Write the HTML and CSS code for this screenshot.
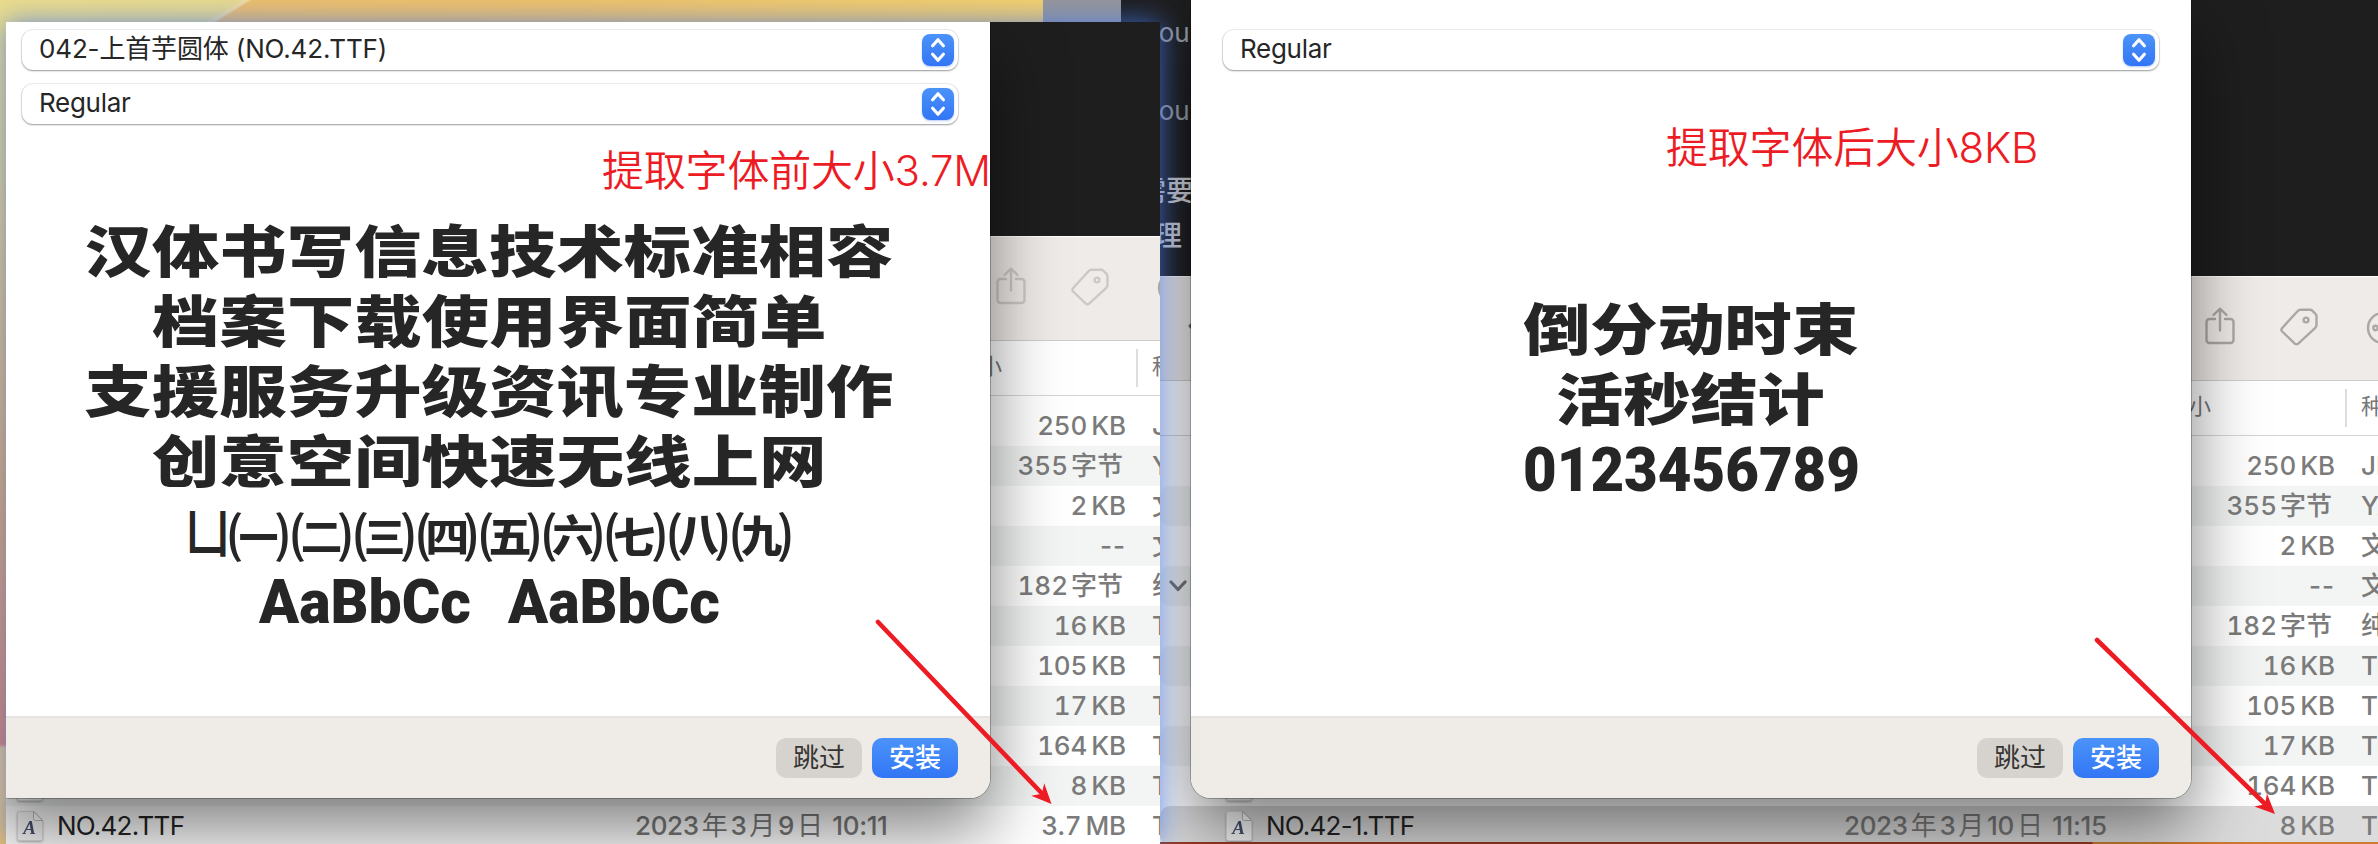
FILE: index.html
```html
<!DOCTYPE html>
<html lang="zh-CN">
<head>
<meta charset="utf-8">
<title>字体安装对比</title>
<link rel="stylesheet" href="styles.css">
</head>
<body>
<svg class="defs" width="0" height="0">
  <symbol id="share" viewBox="0 0 30 38"><path d="M10 12H4.500a3 3 0 0 0-3 3V33a3 3 0 0 0 3 3h21a3 3 0 0 0 3-3V15a3 3 0 0 0-3-3H20M15 23.500V2M8.500 8 15 1.700 21.500 8"/></symbol>
  <symbol id="tag" viewBox="0 0 38 38"><path d="M20.500 1.800h9.500q1.500 0 2.500 1l3 3q1 1 1 2.500v8.500q0 2-1.500 3.400L18.500 35.400q-2 1.800-4 0L2.200 23.500q-1.600-1.700 0-3.500L17.500 3.200q1.200-1.400 3-1.400z"/><circle class="dot" cx="26" cy="12" r="2.400"/></symbol>
  <symbol id="more" viewBox="0 0 34 34"><circle cx="17" cy="17" r="15"/><circle class="dot" cx="9.500" cy="17" r="2.200"/><circle class="dot" cx="17" cy="17" r="2.200"/><circle class="dot" cx="24.500" cy="17" r="2.200"/></symbol>
  <symbol id="updown" viewBox="0 0 16 28"><path d="M2.200 9.500 8 3l5.800 6.500M2.200 18.500 8 25l5.800-6.500"/></symbol>
  <symbol id="down" viewBox="0 0 18 12"><path d="M2 2l7 7.500L16 2"/></symbol>
  <symbol id="back" viewBox="0 0 12 20"><path d="M10 2 2 10l8 8"/></symbol>
  <symbol id="fontfile" viewBox="0 0 26 30"><path class="page" d="M2.500.5h14l9 9v18a2 2 0 0 1-2 2h-21a2 2 0 0 1-2-2v-25a2 2 0 0 1 2-2z"/><path class="fold" d="M16.500.5v7a2 2 0 0 0 2 2h7z"/><text x="12.500" y="22.500" text-anchor="middle">A</text></symbol>
</svg>

<main class="desktop">
  <div class="peek"></div>

  <section class="capture capture-after">
    <div class="editor">
      <p>You)</p><p>You)</p><p class="note">需要</p><p class="note last">理</p>
    </div>
    <div class="finder">
      <div class="toolbar">
        <svg class="back"><use href="#back"/></svg>
        <svg class="share"><use href="#share"/></svg>
        <svg class="tag"><use href="#tag"/></svg>
        <svg class="more"><use href="#more"/></svg>
      </div>
      <div class="columns"><span class="size">大小</span><i></i><span>种类</span></div>
      <ul class="rows">
        <li><span class="size">250 KB</span><span>JPEG</span></li>
        <li><span class="size zh">355 字节</span><span>YAML</span></li>
        <li><span class="size">2 KB</span><span>文稿</span></li>
        <li><svg class="open"><use href="#down"/></svg><span class="size dash">--</span><span>文件夹</span></li>
        <li><span class="size zh">182 字节</span><span>纯文本</span></li>
        <li><span class="size">16 KB</span><span>TrueType</span></li>
        <li><span class="size">105 KB</span><span>TrueType</span></li>
        <li><span class="size">17 KB</span><span>TrueType</span></li>
        <li><svg class="file"><use href="#fontfile"/></svg><span class="size">164 KB</span><span>TrueType</span></li>
        <li class="selected"><svg class="file"><use href="#fontfile"/></svg><b>NO.42-1.TTF</b><time>2023<em>年</em>3<em>月</em>10<em>日</em> 11:15</time><span class="size">8 KB</span><span>TrueType</span></li>
      </ul>
    </div>
    <div class="dialog">
      <div class="popup"><span>Regular</span><span class="stepper"><svg><use href="#updown"/></svg></span></div>
      <p class="remark">提取字体后大小8KB</p>
      <svg class="specimen" viewBox="0 0 1000 250">
        <text class="han" transform="translate(332 66) scale(1.2 1)" textLength="280">倒分动时束</text>
        <text class="han" transform="translate(365 136) scale(1.2 1)" textLength="224">活秒结计</text>
        <text class="latin" x="332" y="207" textLength="337" lengthAdjust="spacingAndGlyphs">0123456789</text>
      </svg>
      <footer><button>跳过</button><button class="primary">安装</button></footer>
    </div>
  </section>

  <section class="capture capture-before">
    <div class="finder">
      <div class="toolbar">
        <svg class="share"><use href="#share"/></svg>
        <svg class="tag"><use href="#tag"/></svg>
        <svg class="more"><use href="#more"/></svg>
      </div>
      <div class="columns"><span class="size">大小</span><i></i><span>种类</span></div>
      <ul class="rows">
        <li><span class="size">250 KB</span><span>JPEG</span></li>
        <li><span class="size zh">355 字节</span><span>YAML</span></li>
        <li><span class="size">2 KB</span><span>文稿</span></li>
        <li><span class="size dash">--</span><span>文件夹</span></li>
        <li><span class="size zh">182 字节</span><span>纯文本</span></li>
        <li><span class="size">16 KB</span><span>TrueType</span></li>
        <li><span class="size">105 KB</span><span>TrueType</span></li>
        <li><span class="size">17 KB</span><span>TrueType</span></li>
        <li><span class="size">164 KB</span><span>TrueType</span></li>
        <li><svg class="file"><use href="#fontfile"/></svg><span class="size">8 KB</span><span>TrueType</span></li>
        <li><svg class="file"><use href="#fontfile"/></svg><b>NO.42.TTF</b><time>2023<em>年</em>3<em>月</em>9<em>日</em> 10:11</time><span class="size">3.7 MB</span><span>TrueType</span></li>
      </ul>
    </div>
    <div class="dialog">
      <div class="popup wide"><span>042-上首芋圆体 (NO.42.TTF)</span><span class="stepper"><svg><use href="#updown"/></svg></span></div>
      <div class="popup"><span>Regular</span><span class="stepper"><svg><use href="#updown"/></svg></span></div>
      <p class="remark">提取字体前大小3.7M</p>
      <svg class="specimen" viewBox="0 0 1000 440">
        <text class="han" transform="translate(94.500 62) scale(1.2 1)" textLength="674">汉体书写信息技术标准相容</text>
        <text class="han" transform="translate(162 132) scale(1.2 1)" textLength="562">档案下载使用界面简单</text>
        <text class="han" transform="translate(94.500 202) scale(1.2 1)" textLength="674">支援服务升级资讯专业制作</text>
        <text class="han" transform="translate(162 272) scale(1.2 1)" textLength="562">创意空间快速无线上网</text>
        <text class="stroke" transform="translate(196 342) scale(.82 1)">凵</text>
        <text class="paren" transform="translate(238 347) scale(1.18 1)" textLength="478">㈠㈡㈢㈣㈤㈥㈦㈧㈨</text>
        <text class="latin" x="269" y="413" textLength="212" lengthAdjust="spacingAndGlyphs">AaBbCc</text>
        <text class="latin" x="518" y="413" textLength="212" lengthAdjust="spacingAndGlyphs">AaBbCc</text>
      </svg>
      <footer><button>跳过</button><button class="primary">安装</button></footer>
    </div>
  </section>

  <svg class="arrows" viewBox="0 0 2378 844">
    <path d="M878 622 1041 792.500M2097 640 2264 803"/>
    <polygon points="0,0 -20,-9 -14,0 -20,9" transform="translate(1051.500 804) rotate(46.400)"/>
    <polygon points="0,0 -20,-9 -14,0 -20,9" transform="translate(2275 814) rotate(44.300)"/>
  </svg>
</main>
</body>
</html>
```
FILE: styles.css
```css
* { box-sizing: border-box; }

body {
  margin: 0;
  font-family: Inter, "Noto Sans CJK SC", sans-serif;
  font-size: 26px;
  color: #262626;
}

p, ul { margin: 0; padding: 0; }
em, b { font-style: normal; font-weight: 400; }
.defs { position: absolute; }

.desktop {
  position: relative;
  width: 2378px;
  height: 844px;
  overflow: hidden;
  background:
    linear-gradient(180deg, #ecdd88 0, #e6cc7c 200px, #e0a860 460px, #db8658 680px, #d87c5c 722px, #e6c07a 726px, #f0bd5e 100%) 0 22px / 6px 100% no-repeat,
    linear-gradient(148deg, #ecdd8a 0, #eadb8c 127px, #f3dfa6 131px, #efbf69 134px, #f0c268 300px, #f4d06c 560px, #f0bb5c 780px);
}

/* Sliver of a window behind both captures */
.peek {
  position: absolute;
  left: 1043px;
  top: 0;
  width: 78px;
  height: 22px;
  background: #96969a;
}

.capture { position: absolute; overflow: hidden; }

.capture-after {
  left: 1121px;
  top: 0;
  width: 1257px;
  height: 844px;
  background: linear-gradient(90deg, #963c24 971px, #cb7c35 972px) 0 842px / 100% 2px no-repeat, #1e1e1e;
}

.capture-before {
  left: 6px;
  top: 22px;
  width: 1154px;
  height: 822px;
  background: #1e1e1e;
  box-shadow: 0 0 26px rgba(70, 120, 235, .8);
}

.editor {
  padding: 16px 0 0 22px;
  color: #9a9da4;
}
.editor p { height: 78px; line-height: 34px; }
.editor .note {
  height: 44px;
  margin-left: -5px;
  padding-top: 2px;
  color: #d0d1d6;
  font-size: 28px;
  font-weight: 500;
}
.editor .last { margin-left: 11px; padding-top: 3px; }

/* Finder window */
.finder {
  position: absolute;
  left: 39px;
  top: 276px;
  width: 1330px;
  height: 566px;
  overflow: hidden;
  background: #fff;
}
.capture-before .finder { left: -55px; top: 214px; height: 630px; }

.toolbar {
  display: flex;
  align-items: flex-start;
  height: 105px;
  padding: 30px 0 0 28px;
  border-top: 1px solid #fff;
  border-bottom: 1px solid #cfcdcc;
  background: #efebe8;
}
.toolbar svg { fill: none; stroke: #aca7a4; stroke-width: 2.400; stroke-linecap: round; stroke-linejoin: round; }
.toolbar .dot { fill: #aca7a4; stroke: none; }
.capture-before .toolbar { padding-left: 1045px; }
.capture-before .toolbar .share, .capture-before .toolbar .tag { opacity: .5; }
.toolbar .back { width: 12px; height: 20px; margin-top: 9px; stroke-width: 3; stroke: #6b6866; }
.toolbar .share { width: 30px; height: 38px; }
.toolbar .back + .share { margin-left: 1005px; }
.toolbar .tag { width: 38px; height: 38px; margin: 1px 0 0 45px; }
.toolbar .more { width: 34px; height: 34px; margin: 4px 0 0 48px; }

.columns {
  display: flex;
  align-items: center;
  height: 55px;
  border-bottom: 1px solid #d6d6d6;
  font-size: 22px;
  color: #777;
}
.columns span { margin-top: -8px; }
.columns .size { width: 178px; margin-left: 1007px; }
.columns i { width: 2px; height: 38px; margin-right: 14px; background: #dedede; }

.rows {
  padding-top: 10px;
  list-style: none;
  color: #7b7b7b;
}
.rows li {
  position: relative;
  display: grid;
  grid-template-columns: 40px 578px 300px 192px 1fr;
  align-items: center;
  height: 40px;
  padding-left: 66px;
  border-radius: 10px;
  line-height: 40px;
  font-weight: 450;
  white-space: nowrap;
}
.rows li:nth-child(even) { background: #f3f5f4; }
.rows li.selected { background: #dcdcdc; }
.rows .size { grid-column: 4; text-align: right; word-spacing: -3px; padding-right: 1px; letter-spacing: -.1px; font-variant-numeric: tabular-nums; }
.rows .zh { padding-right: 4px; word-spacing: -4px; letter-spacing: 0; }
.rows .dash { letter-spacing: 1px; font-variant-numeric: normal; }
.rows .size + span { grid-column: 5; padding-left: 25px; }
.rows b { grid-column: 2; color: #262626; letter-spacing: -.75px; }
.rows time { grid-column: 3; letter-spacing: -.35px; }
.rows time em { margin: 0 3px; }
.rows li > * { grid-row: 1; }
.rows .open {
  position: absolute;
  left: 9px;
  top: 14px;
  width: 18px;
  height: 12px;
  fill: none;
  stroke: #747474;
  stroke-width: 3.200;
  stroke-linecap: round;
  stroke-linejoin: round;
}
.file { width: 26px; height: 30px; filter: drop-shadow(0 1px 1px rgba(0, 0, 0, .3)); }
.page { fill: #f8f8f8; stroke: #ddd; }
.fold { fill: #fff; stroke: #bbb; }
#fontfile text { font: italic bold 19px "Liberation Serif", serif; fill: #46526e; }

/* Font Book install dialog */
.dialog {
  position: absolute;
  left: 70px;
  top: 0;
  display: flex;
  flex-direction: column;
  gap: 14px;
  width: 1000px;
  height: 798px;
  padding-top: 30px;
  border-radius: 0 0 20px 20px;
  background: #fff;
  box-shadow: 0 0 0 1px rgba(0, 0, 0, .25), 0 32px 70px rgba(0, 0, 0, .5);
}
.capture-before .dialog { left: -16px; height: 776px; padding-top: 8px; }

.popup {
  display: flex;
  flex: none;
  align-items: center;
  justify-content: space-between;
  height: 40px;
  margin: 0 32px;
  padding: 0 4px 0 17px;
  border-radius: 11px;
  letter-spacing: -.3px;
  line-height: 36px;
  box-shadow: 0 0 0 1px rgba(0, 0, 0, .07), 0 1px 2px rgba(0, 0, 0, .35);
}
.popup.wide { letter-spacing: -.15px; }
.popup > span:first-child { margin-top: -3px; }
.stepper {
  display: grid;
  place-items: center;
  width: 32px;
  height: 32px;
  border-radius: 8px;
  background: linear-gradient(#4b93f9, #3276f5);
  box-shadow: 0 1px 2px rgba(40, 100, 230, .35);
}
.stepper svg { width: 16px; height: 26px; fill: none; stroke: #fff; stroke-width: 3.400; stroke-linecap: round; stroke-linejoin: round; }

.remark {
  flex: none;
  height: 60px;
  margin: 34px 0 0 475px;
  font: 350 42px/60px Inter, "Noto Sans CJK SC", sans-serif;
  letter-spacing: -.2px;
  color: #ed1c24;
  white-space: nowrap;
}
.capture-before .remark { margin: 3px 0 0 612px; letter-spacing: -.2px; }

.specimen { flex: none; width: 1000px; height: 250px; margin-top: 92px; fill: #262626; }
.capture-before .specimen { height: 440px; margin-top: -5px; }
.specimen text { white-space: pre; }
.han { font: 900 56px "Noto Sans CJK SC", sans-serif; }
.paren, .stroke { font: 700 52px "Noto Sans CJK SC", sans-serif; }
.latin { font: 900 62px Roboto, sans-serif; }

.dialog footer {
  display: flex;
  justify-content: flex-end;
  align-items: center;
  gap: 10px;
  height: 82px;
  margin-top: auto;
  padding: 0 32px 0 0;
  border-top: 2px solid #e5e4e2;
  border-radius: 0 0 20px 20px;
  background: #efece7;
}
button {
  width: 86px;
  height: 40px;
  padding: 0;
  border: 0;
  border-radius: 10px;
  background: #d6d3ce;
  font: 26px/38px Inter, "Noto Sans CJK SC", sans-serif;
  color: #363532;
}
.primary { background: linear-gradient(#4b93f9, #3276f5); color: #fff; font-weight: 500; }

.arrows { position: absolute; inset: 0; width: 2378px; height: 844px; fill: #ed1c24; }
.arrows path { fill: none; stroke: #ed1c24; stroke-width: 4.600; stroke-linecap: round; }
```
